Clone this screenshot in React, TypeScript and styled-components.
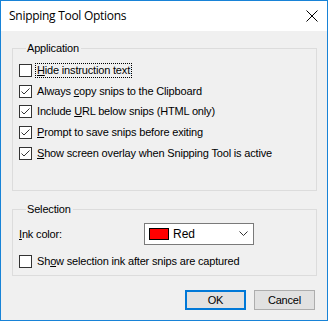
import React from "react";
import styled, { createGlobalStyle } from "styled-components";

const Global = createGlobalStyle`
  html, body { margin: 0; padding: 0; background: #ffffff; }
  * { box-sizing: border-box; }
`;

const Window = styled.div`
  width: 328px;
  height: 321px;
  border: 1px solid #1883d7;
  display: flex;
  flex-direction: column;
  font-family: "Liberation Sans", Arial, sans-serif;
  font-size: 11px;
  letter-spacing: -0.17px;
  color: #000;
`;

const TitleBar = styled.div`
  height: 30px;
  background: #ffffff;
  display: flex;
  align-items: center;
  justify-content: space-between;
  padding: 0 9px 0 8px;
`;

const Title = styled.div`
  font-family: "Open Sans", "Noto Sans", sans-serif;
  font-size: 12px;
  letter-spacing: -0.28px;
  color: #000;
  padding-bottom: 1px;
`;

const CloseIcon = styled.svg`
  width: 12px;
  height: 12px;
`;

const Body = styled.div`
  flex: 1;
  background: #f0f0f0;
  padding: 11px 10px 0 11px;
  display: flex;
  flex-direction: column;
`;

const Group = styled.fieldset<{ $h: number }>`
  margin: 0;
  padding: 0 6px 0 6px;
  border: 1px solid #dcdcdc;
  height: ${(p) => p.$h}px;
  display: flex;
  flex-direction: column;
  & + & { margin-top: 12px; }
`;

const Legend = styled.legend`
  padding: 0 2px 0 1px;
  margin-left: 7px;
  line-height: 13px;
  font-size: 11px;
`;

const List = styled.div`
  padding-top: 5px;
  display: flex;
  flex-direction: column;
`;

const Row = styled.div`
  height: 20.7px;
  display: flex;
  align-items: center;
`;

const Box = styled.span`
  width: 13px;
  height: 13px;
  border: 1px solid #333333;
  background: #ffffff;
  flex: none;
  display: flex;
  align-items: center;
  justify-content: center;
`;

const Label = styled.span<{ $focus?: boolean }>`
  margin-left: 3px;
  padding: 0 1px;
  line-height: 13px;
  border: 1px ${(p) => (p.$focus ? "dotted #000" : "solid transparent")};
  white-space: nowrap;
`;

const U = styled.u`
  text-decoration: underline;
  text-underline-offset: 1px;
`;

const InkRow = styled.div`
  display: flex;
  align-items: center;
  margin-top: 7px;
  height: 22px;
`;

const InkLabel = styled.span`
  width: 125px;
`;

const Select = styled.div`
  width: 110px;
  height: 22px;
  border: 1px solid #7a7a7a;
  background: #ffffff;
  display: flex;
  align-items: center;
  padding-left: 4px;
  padding-right: 5px;
`;

const Swatch = styled.span<{ $color: string }>`
  width: 20px;
  height: 12px;
  border: 1px solid #000;
  background: ${(p) => p.$color};
  flex: none;
`;

const SelectText = styled.span`
  margin-left: 4px;
  font-size: 12px;
  letter-spacing: 0;
  flex: 1;
`;

const Chevron = styled.svg`
  width: 9px;
  height: 6px;
`;

const SecondRow = styled(Row)`
  margin-top: 6px;
`;

const Buttons = styled.div`
  display: flex;
  justify-content: flex-end;
  gap: 8px;
  margin-top: 14px;
  padding-right: 2px;
`;

const Button = styled.div<{ $primary?: boolean }>`
  width: 61px;
  height: 20px;
  background: #e1e1e1;
  border: ${(p) => (p.$primary ? "2px solid #0078d7" : "1px solid #adadad")};
  display: flex;
  align-items: center;
  justify-content: center;
  font-size: 11px;
`;

const Check = () => (
  <svg width="11" height="11" viewBox="0 0 11 11">
    <path d="M1.5 5.5 L4 8 L9.5 2.5" fill="none" stroke="#333" strokeWidth="1" />
  </svg>
);

type Item = { pre: string; key: string; post: string; checked: boolean; focus?: boolean };

const items: Item[] = [
  { pre: "", key: "H", post: "ide instruction text", checked: false, focus: true },
  { pre: "Always ", key: "c", post: "opy snips to the Clipboard", checked: true },
  { pre: "Include ", key: "U", post: "RL below snips (HTML only)", checked: true },
  { pre: "", key: "P", post: "rompt to save snips before exiting", checked: true },
  { pre: "", key: "S", post: "how screen overlay when Snipping Tool is active", checked: true },
];

export default function App() {
  return (
    <>
      <Global />
      <Window>
        <TitleBar>
          <Title>Snipping Tool Options</Title>
          <CloseIcon viewBox="0 0 12 12">
            <path d="M0.5 0.5 L11.5 11.5 M11.5 0.5 L0.5 11.5" stroke="#000" strokeWidth="1" />
          </CloseIcon>
        </TitleBar>
        <Body>
          <Group $h={149}>
            <Legend>Application</Legend>
            <List>
              {items.map((it, i) => (
                <Row key={i}>
                  <Box>{it.checked && <Check />}</Box>
                  <Label $focus={it.focus}>
                    {it.pre}
                    <U>{it.key}</U>
                    {it.post}
                  </Label>
                </Row>
              ))}
            </List>
          </Group>
          <Group $h={73}>
            <Legend>Selection</Legend>
            <InkRow>
              <InkLabel>
                <U>I</U>nk color:
              </InkLabel>
              <Select>
                <Swatch $color="#ff0000" />
                <SelectText>Red</SelectText>
                <Chevron viewBox="0 0 9 6">
                  <path d="M0.5 0.5 L4.5 4.5 L8.5 0.5" fill="none" stroke="#333" strokeWidth="1" />
                </Chevron>
              </Select>
            </InkRow>
            <SecondRow>
              <Box />
              <Label>
                Sh<U>o</U>w selection ink after snips are captured
              </Label>
            </SecondRow>
          </Group>
          <Buttons>
            <Button $primary>OK</Button>
            <Button>Cancel</Button>
          </Buttons>
        </Body>
      </Window>
    </>
  );
}
